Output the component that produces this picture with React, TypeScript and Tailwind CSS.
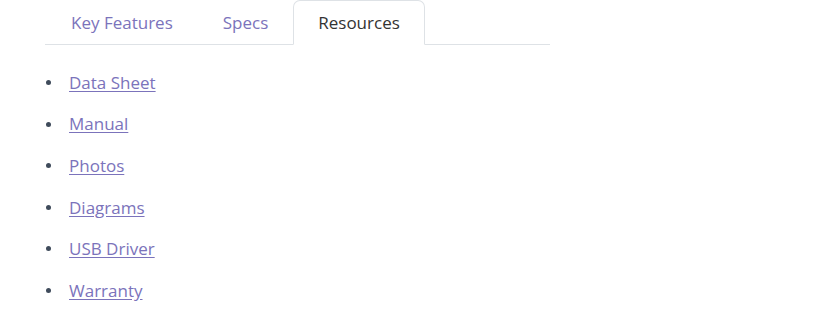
const tabs = ["Key Features", "Specs", "Resources"];
const links = ["Data Sheet", "Manual", "Photos", "Diagrams", "USB Driver", "Warranty"];

export default function App() {
  const active = "Resources";
  return (
    <div className="min-h-[332px] w-[832px] bg-white pl-[45px] font-['Open_Sans',sans-serif] text-[17px] font-medium">
      <div className="flex w-[505px] border-b border-[#dee2e6] pl-[1px]">
        {tabs.map((t) => (
          <div
            key={t}
            className={
              t === active
                ? "-mb-px flex h-[45px] items-center rounded-t-[7px] border border-b-white border-[#dee2e6] bg-white px-6 text-[#333]"
                : "-mb-px flex h-[45px] items-center border border-transparent px-6 text-[#7b73bb]"
            }
          >
            {t}
          </div>
        ))}
      </div>
      <ul className="flex flex-col gap-[20.6px] pt-[27px]">
        {links.map((l) => (
          <li key={l} className="flex h-[21px] items-center">
            <span className="ml-[1px] h-[5px] w-[5px] rounded-full bg-[#3f4b5b]" />
            <a href="#" className="ml-[18px] text-[#7b73bb] underline underline-offset-2">
              {l}
            </a>
          </li>
        ))}
      </ul>
    </div>
  );
}
